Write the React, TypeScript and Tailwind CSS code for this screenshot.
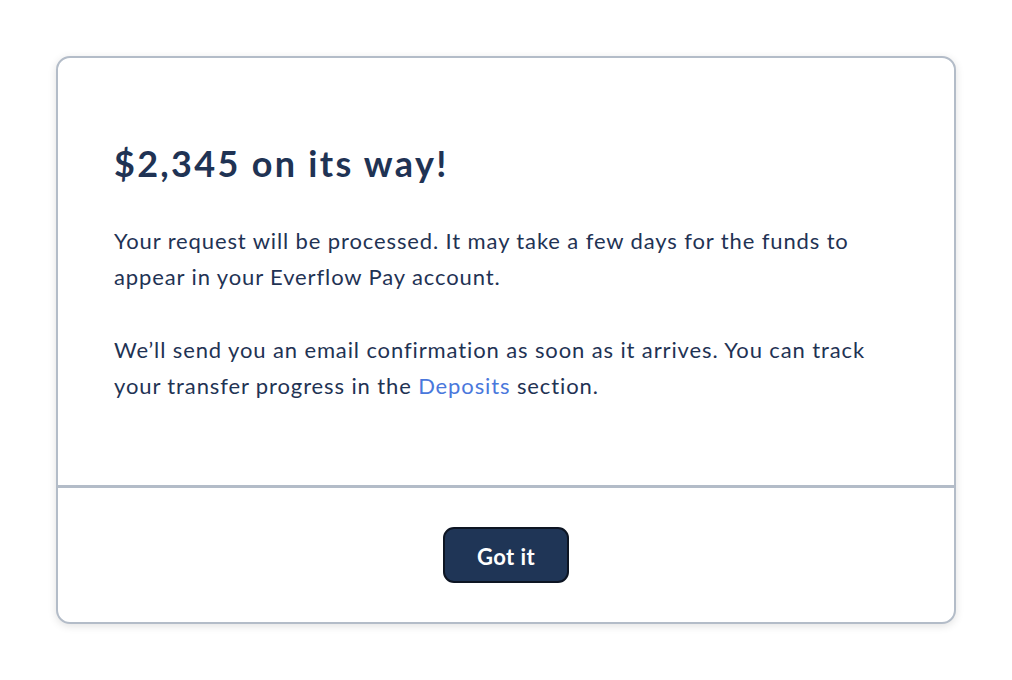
import React from "react";

export default function App() {
  return (
    <div
      className="min-h-[680px] w-full bg-white pt-[56px] px-[56px]"
      style={{ fontFamily: "Lato, 'Noto Sans', sans-serif" }}
    >
      <div className="w-[900px] h-[568px] rounded-[14px] border-2 border-[#b3bcc8] bg-white shadow-[0_2px_8px_rgba(0,0,0,0.12)] flex flex-col overflow-hidden">
        <div className="h-[427px] px-[56px] pt-[83px] text-[#1f3354]">
          <h1 className="text-[36px] leading-[44px] font-bold tracking-[2.3px]">$2,345 on its way!</h1>
          <p className="mt-[38px] text-[22px] leading-[36px] tracking-[0.88px]">
            Your request will be processed. It may take a few days for the funds to appear in your Everflow Pay account.
          </p>
          <p className="mt-[37px] text-[22px] leading-[36px] tracking-[0.88px]">
            We’ll send you an email confirmation as soon as it arrives. You can track your transfer progress in the{" "}
            <span className="text-[#4a78dc]">Deposits</span> section.
          </p>
        </div>
        <div className="h-[3px] bg-[#b3bcc8]" />
        <div className="flex-1 flex items-center justify-center">
          <button className="w-[126px] h-[56px] pt-[3px] rounded-[11px] border-2 border-[#0d1523] bg-[#1f3556] text-white text-[22px] leading-[28px] font-bold tracking-[0.4px]">
            Got it
          </button>
        </div>
      </div>
    </div>
  );
}
